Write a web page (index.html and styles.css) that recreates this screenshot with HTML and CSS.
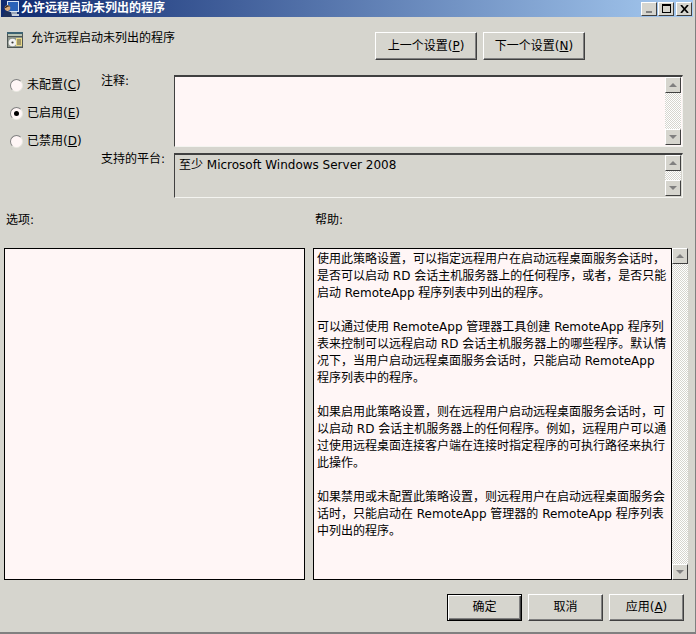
FILE: index.html
```html
<!DOCTYPE html>
<html lang="zh-CN">
<head>
<meta charset="utf-8">
<title>允许远程启动未列出的程序</title>
<link rel="stylesheet" href="styles.css">
</head>
<body>
<div class="dialog">
  <div class="titlebar">
    <svg class="title-icon" viewBox="0 0 16 16" width="16" height="16"><rect x="4" y="0" width="12" height="11" fill="#d8e4f4"/><rect x="5" y="1" width="10" height="9" fill="#2a62b8"/><rect x="8" y="11" width="6" height="2" fill="#9aa6b8"/><rect x="6" y="13" width="10" height="2" fill="#c8d0dc"/><circle cx="4.5" cy="7" r="2.8" fill="#d9a877"/><path d="M1.5 7 Q4 2 7.5 6 L6.5 5.5 Q4 5 3 7Z" fill="#3a2a1a"/><path d="M0 16 Q0 10 4.5 10 Q9 10 9 16Z" fill="#1d2f5c"/></svg>
    <span class="title-text">允许远程启动未列出的程序</span>
    <div class="title-buttons">
      <span class="cap cap-min"><i class="min-glyph"></i></span>
      <span class="cap cap-max"><i class="max-glyph"></i></span>
      <span class="cap cap-close"><svg viewBox="0 0 9 8" width="9" height="8"><path d="M1 0 L8 8 M8 0 L1 8" stroke="#000" stroke-width="1.7" fill="none"/></svg></span>
    </div>
  </div>

  <div class="header">
    <svg class="policy-icon" viewBox="0 0 16 16" width="16" height="16"><rect width="16" height="16" fill="#4e5654"/><rect y="0" width="16" height="2" fill="#3c6272"/><rect x="1" y="2" width="14" height="2" fill="#b9c4b4"/><rect x="1" y="5" width="14" height="10" fill="#8d958c"/><circle cx="5.5" cy="10.5" r="3.8" fill="#f2f2f2"/><circle cx="5.5" cy="10.5" r="1.1" fill="#3a3a3a"/><rect x="9" y="6" width="6" height="8" fill="#e9d98a"/><path d="M10 8 H14 M10 10 H14 M10 12 H14" stroke="#333" stroke-width=".8"/></svg>
    <span class="header-name">允许远程启动未列出的程序</span>
    <div class="nav-buttons">
      <button class="btn btn-nav">上一个设置(<u>P</u>)</button>
      <button class="btn btn-nav">下一个设置(<u>N</u>)</button>
    </div>
  </div>

  <div class="settings">
    <div class="radios">
      <label class="radio"><span class="radio-dot"></span><span>未配置(<u>C</u>)</span></label>
      <label class="radio"><span class="radio-dot is-on"></span><span>已启用(<u>E</u>)</span></label>
      <label class="radio"><span class="radio-dot"></span><span>已禁用(<u>D</u>)</span></label>
    </div>
    <div class="fields">
      <div class="field field-note">
        <span class="field-label">注释:</span>
        <div class="sunken sunken-note">
          <div class="scrollbar">
            <span class="sb-btn"><i class="arrow-up"></i></span><span class="sb-track"></span><span class="sb-btn"><i class="arrow-down"></i></span>
          </div>
        </div>
      </div>
      <div class="field field-platform">
        <span class="field-label">支持的平台:</span>
        <div class="sunken sunken-platform">
          <div class="platform-text">至少 Microsoft Windows Server 2008</div>
          <div class="scrollbar">
            <span class="sb-btn"><i class="arrow-up"></i></span><span class="sb-track"></span><span class="sb-btn"><i class="arrow-down"></i></span>
          </div>
        </div>
      </div>
    </div>
  </div>

  <div class="section-labels">
    <span class="label-options">选项:</span>
    <span class="label-help">帮助:</span>
  </div>

  <div class="panels">
    <div class="options-box"></div>
    <div class="help-wrap">
      <div class="help-box">
        <p>使用此策略设置，可以指定远程用户在启动远程桌面服务会话时，<br>是否可以启动 RD 会话主机服务器上的任何程序，或者，是否只能<br>启动 RemoteApp 程序列表中列出的程序。</p>
        <p>可以通过使用 RemoteApp 管理器工具创建 RemoteApp 程序列<br>表来控制可以远程启动 RD 会话主机服务器上的哪些程序。默认情<br>况下，当用户启动远程桌面服务会话时，只能启动 RemoteApp<br>程序列表中的程序。</p>
        <p>如果启用此策略设置，则在远程用户启动远程桌面服务会话时，可<br>以启动 RD 会话主机服务器上的任何程序。例如，远程用户可以通<br>过使用远程桌面连接客户端在连接时指定程序的可执行路径来执行<br>此操作。</p>
        <p>如果禁用或未配置此策略设置，则远程用户在启动远程桌面服务会<br>话时，只能启动在 RemoteApp 管理器的 RemoteApp 程序列表<br>中列出的程序。</p>
      </div>
      <div class="scrollbar scrollbar-help">
        <span class="sb-btn"><i class="arrow-up"></i></span><span class="sb-track"></span><span class="sb-btn"><i class="arrow-down"></i></span>
      </div>
    </div>
  </div>

  <div class="footer">
    <button class="btn btn-foot btn-default">确定</button>
    <button class="btn btn-foot">取消</button>
    <button class="btn btn-foot">应用(<u>A</u>)</button>
  </div>
</div>
</body>
</html>
```
FILE: styles.css
```css
* { box-sizing: border-box; }
html, body { margin: 0; padding: 0; }
body {
  width: 696px;
  height: 634px;
  overflow: hidden;
  background: #d6d5ce;
  font-family: "DejaVu Sans", "Noto Sans CJK SC", sans-serif;
  font-size: 12px;
  line-height: 17px;
  color: #000;
}
.dialog {
  width: 696px;
  height: 634px;
  display: flex;
  flex-direction: column;
  border-right: 1px solid #808080;
  border-bottom: 2px solid #808080;
  background: #d6d5ce;
}
.titlebar {
  height: 17px;
  margin: 0 2px 0 1px;
  padding: 0 1px 0 2px;
  display: flex;
  align-items: center;
  background: linear-gradient(90deg, #0f2a70 0%, #a6caf0 100%);
}
.title-icon { flex: none; }
.title-text { margin-left: 2px; color: #fff; font-weight: 700; font-size: 12px; }
.title-buttons { margin-left: auto; display: flex; gap: 1px; }
.cap {
  width: 16px;
  height: 14px;
  display: flex;
  align-items: center;
  justify-content: center;
  background: #d6d5ce;
  border: 1px solid;
  border-color: #fff #404040 #404040 #fff;
}
.cap-close { margin-left: 1px; }
.min-glyph { width: 6px; height: 2px; background: #808080; margin-top: 7px; }
.max-glyph { width: 9px; height: 9px; border: 1px solid #000; border-top-width: 2px; }
.header {
  height: 46px;
  padding: 15px 110px 0 7px;
  display: flex;
  align-items: flex-start;
}
.policy-icon { flex: none; }
.header-name { margin-left: 8px; margin-top: -2px; }
.nav-buttons { margin-left: auto; display: flex; gap: 6px; }
.btn {
  font: inherit;
  color: #000;
  background: #d6d5ce;
  border: 1px solid;
  border-color: #fff #404040 #404040 #fff;
  box-shadow: inset -1px -1px 0 #808080;
  padding: 0;
  white-space: nowrap;
}
.btn-nav { width: 102px; height: 28px; }
.settings {
  height: 139px;
  padding: 14px 12px 0 10px;
  display: flex;
  align-items: flex-start;
}
.radios {
  width: 91px;
  flex: none;
  display: flex;
  flex-direction: column;
  gap: 11px;
}
.radio { display: flex; align-items: center; gap: 4px; }
.radio-dot {
  width: 13px;
  height: 13px;
  border-radius: 50%;
  background: #fff6f6;
  border: 1px solid;
  border-color: #808080 #e8e8e0 #e8e8e0 #808080;
  display: flex;
  align-items: center;
  justify-content: center;
}
.radio-dot.is-on::after {
  content: "";
  width: 5px;
  height: 5px;
  border-radius: 50%;
  background: #000;
}
.fields { flex: 1; margin-top: -2px; }
.field { display: flex; align-items: flex-start; }
.field-note { margin-bottom: 6px; }
.field-label { width: 73px; flex: none; margin-top: -2px; }
.sunken {
  width: 509px;
  padding: 0 1px 1px 2px;
  display: flex;
  justify-content: flex-end;
  border: 1px solid;
  border-color: #404040 #f4f4f0 #f4f4f0 #404040;
  border-top-width: 2px;
}
.sunken-note { height: 72px; background: #fff6f6; }
.sunken-platform { height: 45px; background: #d6d5ce; }
.platform-text { flex: 1; padding: 2px 0 0 2px; }
.scrollbar {
  width: 16px;
  flex: none;
  display: flex;
  flex-direction: column;
}
.sb-btn {
  height: 16px;
  flex: none;
  display: flex;
  align-items: center;
  justify-content: center;
  background: #d6d5ce;
  border: 1px solid;
  border-color: #fff #404040 #404040 #fff;
}
.sb-track {
  flex: 1;
  background: repeating-conic-gradient(#fff 0 25%, #d6d5ce 0 50%) 0 0 / 2px 2px;
}
.arrow-up, .arrow-down { width: 0; height: 0; border-left: 4px solid transparent; border-right: 4px solid transparent; }
.arrow-up { border-bottom: 4px solid #808080; }
.arrow-down { border-top: 4px solid #808080; }
.section-labels {
  height: 46px;
  padding: 10px 0 0 6px;
  display: flex;
}
.label-options { width: 309px; }
.panels {
  height: 332px;
  padding: 0 7px 0 4px;
  display: flex;
  gap: 8px;
}
.options-box {
  width: 301px;
  background: #fff6f6;
  border: 1px solid #000;
}
.help-wrap { flex: 1; display: flex; }
.help-box {
  flex: 1;
  background: #fff6f6;
  border: 1px solid #000;
  padding: 2px 0 0 3px;
  white-space: nowrap;
}
.help-box p { margin: 0 0 17px; }
.footer {
  flex: 1;
  padding: 14px 11px 0 0;
  display: flex;
  justify-content: flex-end;
  align-items: flex-start;
  gap: 6px;
}
.btn-foot { width: 75px; height: 27px; }
.btn-default { border: 1px solid #000; box-shadow: inset 1px 1px 0 #fff, inset -1px -1px 0 #404040, inset -2px -2px 0 #808080; }
```
